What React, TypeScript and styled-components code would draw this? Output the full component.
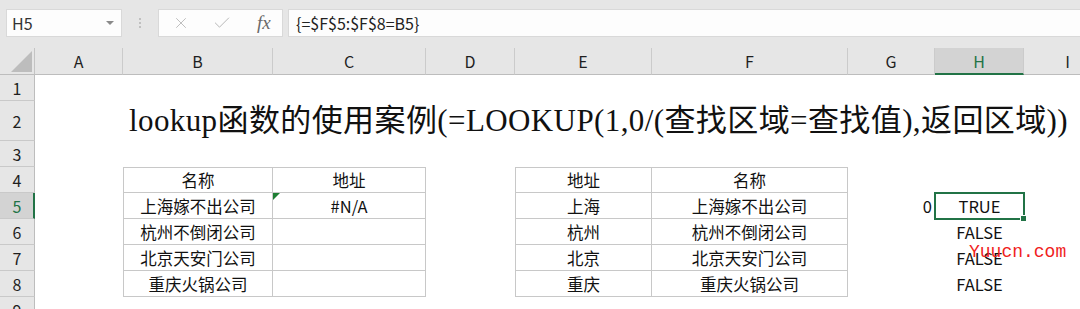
import React from 'react';
import styled, { createGlobalStyle } from 'styled-components';
import { X, Check } from 'lucide-react';

const GlobalStyle = createGlobalStyle`
  html, body {
    margin: 0;
    background: #fff;
  }
`;

const SANS = `"Noto Sans CJK SC", "Noto Sans", sans-serif`;
const GREEN = '#217346';

const Page = styled.div`
  width: 1080px;
  height: 309px;
  overflow: hidden;
  position: relative;
  background: #fff;
  font-family: ${SANS};
`;

const Toolbar = styled.div`
  height: 48px;
  box-sizing: border-box;
  padding: 9px 0 0 6px;
  background: #e6e6e6;
  display: flex;
  align-items: flex-start;
`;

const NameBox = styled.div`
  width: 116px;
  height: 28px;
  box-sizing: border-box;
  background: #fdfdfd;
  border: 1px solid #d9d9d9;
  display: flex;
  align-items: center;
  justify-content: space-between;
  padding: 0 7px 0 5px;
  font-size: 16px;
  color: #333;
`;

const Caret = styled.span`
  width: 0;
  height: 0;
  border-left: 4px solid transparent;
  border-right: 4px solid transparent;
  border-top: 4px solid #8a8a8a;
`;

const Grip = styled.div`
  width: 36px;
  height: 28px;
  display: flex;
  flex-direction: column;
  align-items: center;
  justify-content: center;
  gap: 2px;
  & > i {
    width: 2px;
    height: 2px;
    background: #b3b3b3;
    border-radius: 1px;
  }
`;

const FxButtons = styled.div`
  width: 125px;
  height: 28px;
  box-sizing: border-box;
  background: #fdfdfd;
  border: 1px solid #d9d9d9;
  display: flex;
  align-items: center;
  padding-left: 13px;
  gap: 22px;
  color: #b8b8b8;
`;

const FxLabel = styled.span`
  font-family: "Liberation Serif", serif;
  font-style: italic;
  font-size: 19px;
  color: #6a6a6a;
  margin-left: 3px;
`;

const FormulaInput = styled.div`
  flex: 1;
  margin-left: 5px;
  height: 28px;
  box-sizing: border-box;
  background: #fdfdfd;
  border: 1px solid #d9d9d9;
  border-right: none;
  display: flex;
  align-items: center;
  padding-left: 7px;
  font-size: 16px;
  color: #222;
`;

const COLS = [
  { key: 'A', w: 88 },
  { key: 'B', w: 150 },
  { key: 'C', w: 153 },
  { key: 'D', w: 89 },
  { key: 'E', w: 137 },
  { key: 'F', w: 196 },
  { key: 'G', w: 87 },
  { key: 'H', w: 89 },
  { key: 'I', w: 88 },
];
const ROWS = [
  { n: 1, h: 26 },
  { n: 2, h: 40 },
  { n: 3, h: 26 },
  { n: 4, h: 26 },
  { n: 5, h: 26 },
  { n: 6, h: 26 },
  { n: 7, h: 26 },
  { n: 8, h: 26 },
  { n: 9, h: 26 },
];

const Sheet = styled.div`
  display: grid;
  grid-template-columns: 35px ${COLS.map(c => `${c.w}px`).join(' ')};
  grid-template-rows: 27px ${ROWS.map(r => `${r.h}px`).join(' ')};
`;

const Corner = styled.div`
  background: #e6e6e6;
  border-right: 1px solid #c4c4c4;
  border-bottom: 1px solid #bdbdbd;
  box-sizing: border-box;
  position: relative;
  &::after {
    content: '';
    position: absolute;
    right: 2px;
    bottom: 2px;
    width: 0;
    height: 0;
    border-left: 21px solid transparent;
    border-bottom: 21px solid #bdbdbd;
  }
`;

const ColHead = styled.div<{ $sel?: boolean }>`
  box-sizing: border-box;
  background: ${p => (p.$sel ? '#d3d3d3' : '#e6e6e6')};
  border-right: 1px solid #cbcbcb;
  border-bottom: ${p => (p.$sel ? `2px solid ${GREEN}` : '1px solid #bdbdbd')};
  display: flex;
  align-items: center;
  justify-content: center;
  padding-top: ${p => (p.$sel ? '1px' : '0')};
  font-size: 16px;
  color: ${p => (p.$sel ? GREEN : '#1f1f1f')};
`;

const RowHead = styled.div<{ $sel?: boolean }>`
  box-sizing: border-box;
  background: ${p => (p.$sel ? '#d3d3d3' : '#e6e6e6')};
  border-right: ${p => (p.$sel ? `2px solid ${GREEN}` : '1px solid #bdbdbd')};
  border-bottom: 1px solid #c9c9c9;
  display: flex;
  align-items: center;
  justify-content: center;
  padding-left: ${p => (p.$sel ? '1px' : '0')};
  font-size: 16px;
  color: ${p => (p.$sel ? GREEN : '#1f1f1f')};
`;

type Align = 'left' | 'center' | 'right';

const Cell = styled.div<{ $box?: boolean; $top?: boolean; $left?: boolean; $align?: Align }>`
  box-sizing: border-box;
  position: relative;
  display: flex;
  align-items: center;
  justify-content: ${p =>
    p.$align === 'right' ? 'flex-end' : p.$align === 'left' ? 'flex-start' : 'center'};
  padding: 0 3px;
  font-size: 16.5px;
  color: #111;
  white-space: nowrap;
  border-right: ${p => (p.$box ? '1px solid #c8c8c8' : 'none')};
  border-bottom: ${p => (p.$box ? '1px solid #c8c8c8' : 'none')};
  border-top: ${p => (p.$box && p.$top ? '1px solid #c8c8c8' : 'none')};
  border-left: ${p => (p.$box && p.$left ? '1px solid #c8c8c8' : 'none')};
`;

const TitleCell = styled(Cell)`
  align-items: flex-end;
  padding: 0 0 1px 6px;
  overflow: visible;
  z-index: 1;
`;

const Title = styled.span`
  font-family: "Liberation Serif", "Noto Sans CJK SC", serif;
  font-size: 31px;
  line-height: 38px;
  letter-spacing: 0.4px;
  color: #111;
`;

const ErrorFlag = styled.span`
  position: absolute;
  left: 0;
  top: 0;
  width: 0;
  height: 0;
  border-top: 7px solid #1e7e34;
  border-right: 7px solid transparent;
`;

const Selection = styled.span`
  position: absolute;
  left: -1px;
  top: -1px;
  right: -1px;
  bottom: -1px;
  border: 2px solid ${GREEN};
  pointer-events: none;
  &::after {
    content: '';
    position: absolute;
    right: -4px;
    bottom: -4px;
    width: 5px;
    height: 5px;
    background: ${GREEN};
    border: 1px solid #fff;
  }
`;

const Watermark = styled.div`
  position: absolute;
  left: 969px;
  top: 242px;
  font-family: "Liberation Mono", monospace;
  font-size: 18px;
  color: #f01e1e;
  z-index: 3;
`;

type CellData = { text: string; align?: Align; sel?: boolean };

const table1: Record<string, string> = {
  B4: '名称', C4: '地址',
  B5: '上海嫁不出公司', C5: '#N/A',
  B6: '杭州不倒闭公司', B7: '北京天安门公司', B8: '重庆火锅公司',
};
const table2: Record<string, string> = {
  E4: '地址', F4: '名称',
  E5: '上海', F5: '上海嫁不出公司',
  E6: '杭州', F6: '杭州不倒闭公司',
  E7: '北京', F7: '北京天安门公司',
  E8: '重庆', F8: '重庆火锅公司',
};
const extra: Record<string, CellData> = {
  G5: { text: '0', align: 'right' },
  H5: { text: 'TRUE', sel: true },
  H6: { text: 'FALSE' },
  H7: { text: 'FALSE' },
  H8: { text: 'FALSE' },
};

const inTable = (col: string, row: number) => {
  if (row < 4 || row > 8) return null;
  if (col === 'B' || col === 'C') return { top: row === 4, left: col === 'B' };
  if (col === 'E' || col === 'F') return { top: row === 4, left: col === 'E' };
  return null;
};

export default function App() {
  return (
    <Page>
      <GlobalStyle />
      <Toolbar>
        <NameBox>
          H5
          <Caret />
        </NameBox>
        <Grip>
          <i />
          <i />
          <i />
        </Grip>
        <FxButtons>
          <X size={18} strokeWidth={1.2} />
          <Check size={20} strokeWidth={1.2} />
          <FxLabel>fx</FxLabel>
        </FxButtons>
        <FormulaInput>{'{=$F$5:$F$8=B5}'}</FormulaInput>
      </Toolbar>
      <Sheet>
        <Corner />
        {COLS.map(c => (
          <ColHead key={c.key} $sel={c.key === 'H'}>
            {c.key}
          </ColHead>
        ))}
        {ROWS.map(r => (
          <React.Fragment key={r.n}>
            <RowHead $sel={r.n === 5}>{r.n}</RowHead>
            {COLS.map(c => {
              const id = `${c.key}${r.n}`;
              if (id === 'B2') {
                return (
                  <TitleCell key={id} $align="left">
                    <Title>lookup函数的使用案例(=LOOKUP(1,0/(查找区域=查找值),返回区域))</Title>
                  </TitleCell>
                );
              }
              const box = inTable(c.key, r.n);
              const text = table1[id] ?? table2[id] ?? extra[id]?.text ?? '';
              const ex = extra[id];
              return (
                <Cell
                  key={id}
                  $box={!!box}
                  $top={box?.top}
                  $left={box?.left}
                  $align={ex?.align}
                >
                  {id === 'C5' && <ErrorFlag />}
                  {text}
                  {ex?.sel && <Selection />}
                </Cell>
              );
            })}
          </React.Fragment>
        ))}
      </Sheet>
      <Watermark>Yuucn.com</Watermark>
    </Page>
  );
}
